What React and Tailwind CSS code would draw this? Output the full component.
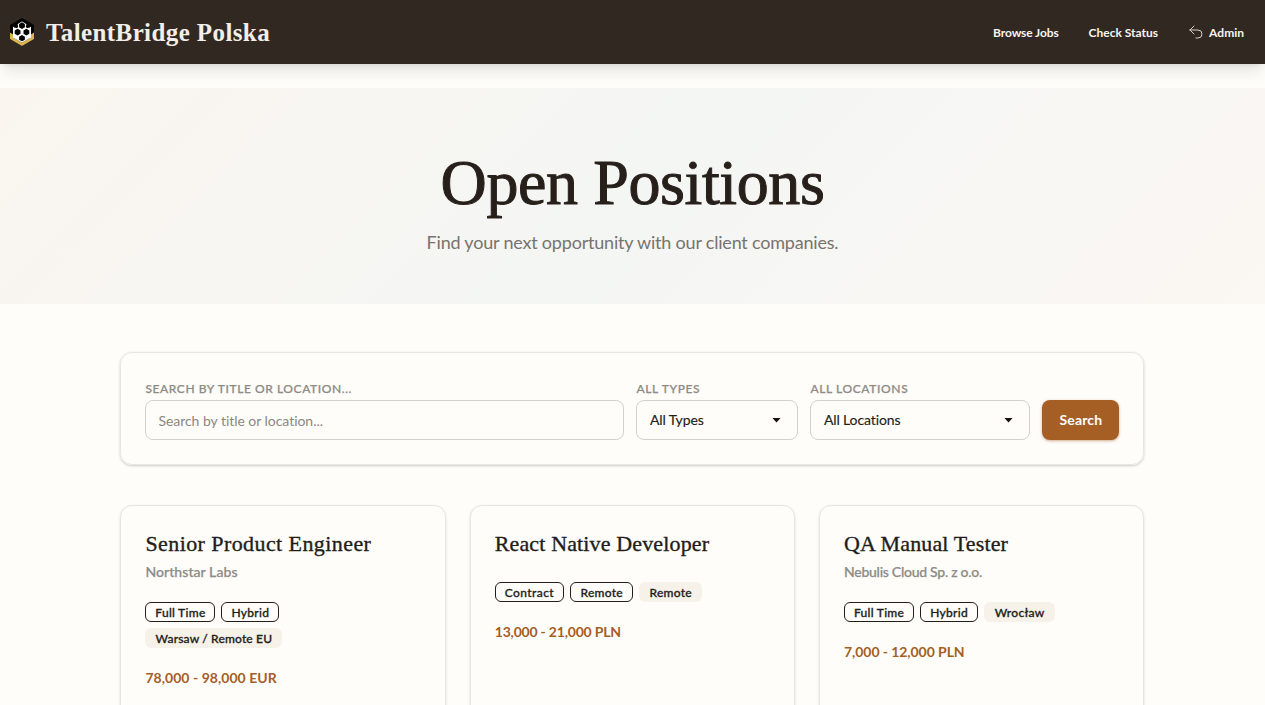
import React from 'react';

const jobs = [
  {
    title: 'Senior Product Engineer',
    titleClass: 'tracking-[0.42px]',
    company: 'Northstar Labs',
    companyClass: 'tracking-[0.07px]',
    badges: [
      { label: 'Full Time', className: 'w-[70px] border border-[#231d19]' },
      { label: 'Hybrid', className: 'w-[58px] border border-[#231d19]' },
      { label: 'Warsaw / Remote EU', className: 'w-[137px] bg-[#f6f2e9] tracking-[0.16px]' }
    ],
    salary: '78,000 - 98,000 EUR',
    salaryClass: 'tracking-[0.04px]'
  },
  {
    title: 'React Native Developer',
    titleClass: 'tracking-[0.14px]',
    badges: [
      { label: 'Contract', className: 'w-[69.5px] border border-[#231d19] tracking-[0.4px]' },
      { label: 'Remote', className: 'w-[63px] border border-[#231d19]' },
      { label: 'Remote', className: 'w-[63px] bg-[#f6f2e9]' }
    ],
    salary: '13,000 - 21,000 PLN',
    salaryClass: 'tracking-[-0.2px]'
  },
  {
    title: 'QA Manual Tester',
    titleClass: 'tracking-[0.14px]',
    company: 'Nebulis Cloud Sp. z o.o.',
    companyClass: 'tracking-[-0.27px]',
    badges: [
      { label: 'Full Time', className: 'w-[70px] border border-[#231d19]' },
      { label: 'Hybrid', className: 'w-[58px] border border-[#231d19]' },
      { label: 'Wrocław', className: 'w-[71px] bg-[#f6f2e9]' }
    ],
    salary: '7,000 - 12,000 PLN',
    salaryClass: 'tracking-[-0.07px]'
  }
];

const Logo = () => (
  <svg className="w-6 h-7" viewBox="0 0 24 28">
    <path d="M12 0 24 7v14l-12 7L0 21V7z" fill="#060504" />
    <path d="M0 14.5 4 17v3l8 4.5 8-4.5v-3l4-2.500V21l-12 7L0 21z" fill="#d9b450" />
    <path d="M3 8.500 5 10l3.500-4.500L12 3.500l3.500 2L19 10l2-1.500v11L12 24.500l-9-5z" fill="#fff" />
    <g fill="#060504">
      <path d="m12 4.300 2.900 1.700v3.300L12 11 9.100 9.300V6z" />
      <path d="m7.600 10.700 2.900 1.700v3.300l-2.900 1.700-2.900-1.700v-3.300z" />
      <path d="m16.400 10.700 2.900 1.700v3.300l-2.900 1.700-2.900-1.700v-3.300z" />
      <path d="m12 17 2.900 1.700v3L12 23.300l-2.900-1.600v-3z" />
      <path d="m6.500 6.500 1.600.9v1.900l-1.600.9-1.600-.9V7.400z" />
      <path d="m17.500 6.500 1.600.9v1.900l-1.600.9-1.600-.9V7.400z" />
    </g>
  </svg>
);

const Select = ({ label, value, className }) => (
  <div className={className}>
    <label className="block h-[23px] pt-1 text-xs leading-4 font-medium tracking-[0.62px] text-[#8e8b86] [-webkit-text-stroke:0.25px]">{label}</label>
    <button className="flex items-center justify-between w-full h-10 pl-[12.5px] pr-4 rounded-lg border border-[#d3d1cd] text-sm tracking-[-0.12px] text-[#231d19] [-webkit-text-stroke:0.15px]">
      <span>{value}</span>
      <svg className="w-[9px] h-[5px]" viewBox="0 0 9 5">
        <path d="M.5 0h8l-4 4.500z" fill="#17120f" />
      </svg>
    </button>
  </div>
);

const JobCard = ({ job }) => (
  <div className="h-[260px] p-6 rounded-xl border border-[#e8e6e2] bg-[#fefdfa] shadow-[0_1px_3px_rgba(40,30,20,0.12)]">
    <div className="pb-1 mb-5">
      <h2 className={`font-['Liberation_Serif',serif] text-[22px] leading-7 text-[#231d19] [-webkit-text-stroke:0.35px] ${job.titleClass}`}>
        {job.title}
      </h2>
      {job.company && (
        <p className={`mt-1 -mb-1 text-sm font-medium leading-5 text-[#8e8b86] [-webkit-text-stroke:0.25px] ${job.companyClass}`}>{job.company}</p>
      )}
    </div>
    <div className="flex flex-wrap gap-1.5 mb-5 tracking-[0.28px]">
      {job.badges.map((badge, index) => (
        <span
          key={index}
          className={`flex items-center justify-center h-5 pt-px rounded-md text-xs font-medium whitespace-nowrap text-[#231d19] [-webkit-text-stroke:0.3px] ${badge.className}`}
        >
          {badge.label}
        </span>
      ))}
    </div>
    <p className={`text-sm leading-5 font-bold text-[#a55e24] ${job.salaryClass}`}>{job.salary}</p>
  </div>
);

const App = () => {
  return (
    <div className="h-[705px] overflow-hidden bg-[#fefdfa] font-['Lato',sans-serif]">
      {/* Navbar */}
      <header className="flex items-center justify-between h-16 pl-2.5 pr-[21px] bg-[#312822] shadow-[0_10px_15px_-3px_rgba(0,0,0,0.1),0_4px_6px_-4px_rgba(0,0,0,0.1)]">
        <div className="flex items-center gap-3">
          <Logo />
          <span className="pt-0.5 font-['Liberation_Serif',serif] text-[25px] leading-8 font-bold tracking-[0.4px] text-[#f3eee8]">TalentBridge Polska</span>
        </div>
        <nav className="flex items-center pt-0.5 text-xs font-bold text-[#f8f4ef]">
          <a className="mr-[30px] tracking-[-0.1px]">Browse Jobs</a>
          <a className="mr-[30px]">Check Status</a>
          <a className="flex items-center gap-[5px]">
            <svg className="w-4 h-4 -mt-0.5" viewBox="0 0 24 24" fill="none" stroke="#d5cfc8" strokeWidth="1.500" strokeLinecap="round" strokeLinejoin="round">
              <path d="M9 15 3 9m0 0 6-6M3 9h12a6 6 0 0 1 0 12h-3" />
            </svg>
            Admin
          </a>
        </nav>
      </header>

      {/* Hero */}
      <section className="mt-6 h-[216px] pt-[59px] text-center bg-[linear-gradient(135deg,#faf5ef_0%,#f4f6f4_50%,#fbf7f3_100%)]">
        <h1 className="font-['Liberation_Serif',serif] text-[64px] leading-[72px] tracking-[-0.4px] text-[#271f19] [-webkit-text-stroke:1px]">Open Positions</h1>
        <p className="mt-[9px] text-lg leading-7 tracking-[-0.2px] text-[#77736e]">Find your next opportunity with our client companies.</p>
      </section>

      <main className="w-[1024px] ml-[120.4px] pt-12">
        {/* Search filters */}
        <div className="flex gap-3 h-[113px] p-6 rounded-xl border border-[#e8e6e2] shadow-[0_1px_3px_rgba(40,30,20,0.12),0_1px_2px_rgba(40,30,20,0.1)]">
          <div className="flex-1">
            <label className="block h-[23px] pt-1 text-xs leading-4 font-medium tracking-[0.58px] text-[#8e8b86] [-webkit-text-stroke:0.25px]">SEARCH BY TITLE OR LOCATION...</label>
            <input
              type="text"
              placeholder="Search by title or location..."
              className="w-full h-10 px-3 rounded-lg border border-[#d3d1cd] text-sm tracking-[-0.04px] placeholder:text-[#8a8782]"
            />
          </div>
          <Select label="ALL TYPES" value="All Types" className="w-[162px]" />
          <Select label="ALL LOCATIONS" value="All Locations" className="w-[220px]" />
          <button className="w-[77px] h-10 mt-[23px] rounded-lg bg-[#a55e24] text-sm font-bold tracking-[0.18px] text-white shadow-[0_1px_3px_rgba(165,94,36,0.5)]">
            Search
          </button>
        </div>

        {/* Job cards */}
        <div className="grid grid-cols-3 gap-6 mt-10">
          {jobs.map((job) => (
            <JobCard key={job.title} job={job} />
          ))}
        </div>
      </main>
    </div>
  );
};

export default App;
